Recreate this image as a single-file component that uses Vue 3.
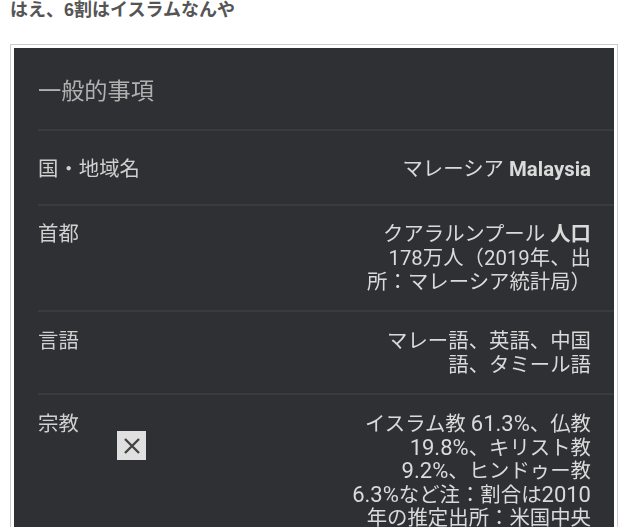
<script setup>
const rows = [
  { label: '国・地域名', cls: 'first', lines: [[{ t: 'マレーシア ' }, { t: 'Malaysia', c: 'strong' }]] },
  { label: '首都', lines: [[{ t: 'クアラルンプール ' }, { t: '人口', c: 'strong' }], [{ t: '178万人（2019年、出' }], [{ t: '所：マレーシア統計局）' }]] },
  { label: '言語', cls: 'third', lines: [[{ t: 'マレー語、英語、中国' }], [{ t: '語、タミール語' }]] },
  { label: '宗教', cls: 'fourth', lines: [[{ t: 'イスラム教 ' }, { t: '61.3%', c: 'num' }, { t: '、仏教' }], [{ t: '19.8%', c: 'num' }, { t: '、キリスト教' }], [{ t: '9.2%', c: 'num' }, { t: '、ヒンドゥー教' }], [{ t: '6.3%', c: 'num' }, { t: 'など注：割合は' }, { t: '2010', c: 'num' }], [{ t: '年の推定出所：米国中央' }]] }
]
</script>

<template>
  <div class="page">
    <h2 class="caption">はえ、6割はイスラムなんや</h2>
    <div class="frame">
      <div class="shot">
        <div class="title">一般的事項</div>
        <div v-for="row in rows" :key="row.label" class="row" :class="row.cls">
          <div class="label">{{ row.label }}</div>
          <div class="value">
            <div v-for="(line, i) in row.lines" :key="i" class="line">
              <span v-for="(part, j) in line" :key="j" :class="part.c">{{ part.t }}</span>
            </div>
          </div>
        </div>
      </div>
      <button class="close" type="button" aria-label="閉じる">
        <svg width="16" height="16" viewBox="0 0 16 16" fill="none" stroke="#444" stroke-width="2.4">
          <path d="M1 1 L15 15 M15 1 L1 15" />
        </svg>
      </button>
    </div>
  </div>
</template>

<style>
html, body { margin: 0; background: #fff; overflow: hidden; }
</style>

<style scoped>
.page {
  height: 527px;
  overflow: hidden;
  font-family: "Liberation Sans", "Noto Sans CJK JP", sans-serif;
}
.caption {
  margin: 0;
  padding: 0 0 0 10px;
  height: 44px;
  box-sizing: border-box;
  font-size: 18px;
  line-height: 20px;
  font-weight: 700;
  color: #555;
}
.frame {
  position: relative;
  width: 608px;
  margin-left: 10px;
  box-sizing: border-box;
  border: 1px solid #ccc;
  padding: 3px;
}
.shot {
  background: #2f3033;
  font-family: Roboto, "Noto Sans CJK JP", sans-serif;
  padding-left: 24px;
  color: #dadada;
  font-size: 20.4px;
  line-height: 24px;
  filter: blur(0.35px);
}
.title {
  height: 81px;
  display: flex;
  align-items: center;
  padding-top: 5px;
  box-sizing: border-box;
  font-size: 23.2px;
  color: #b0b0b0;
}
.row {
  display: flex;
  justify-content: space-between;
  border-top: 2px solid #3a3b3e;
  padding: 16px 23px 16px 0;
}
.row.first {
  padding-top: 26px;
  padding-bottom: 23px;
}
.row.third {
  padding-top: 17px;
}
.row.fourth {
  padding-top: 17px;
}
.label {
  color: #d0d0d0;
  white-space: nowrap;
  height: 24px;
}
.value {
  text-align: right;
  white-space: nowrap;
}
.line {
  height: 24px;
}
.fourth .line {
  height: 23.5px;
}
.strong {
  font-weight: 700;
}
.num {
  font-size: 22px;
}
.close {
  position: absolute;
  left: 106px;
  top: 386px;
  width: 29px;
  height: 29px;
  padding: 0;
  border: 0;
  background: #e0e0e0;
  display: flex;
  align-items: center;
  justify-content: center;
}
</style>
